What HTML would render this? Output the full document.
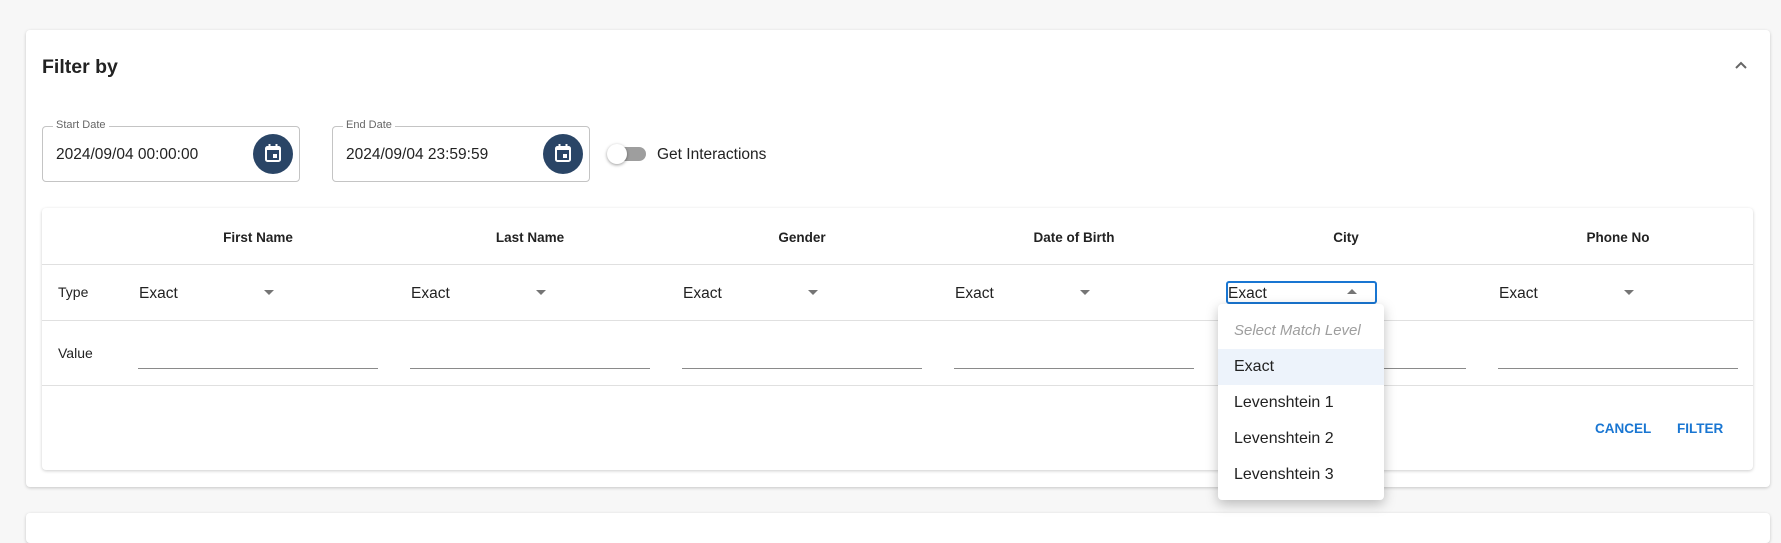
<!DOCTYPE html>
<html><head><meta charset="utf-8"><style>
*{box-sizing:border-box;margin:0;padding:0}
body{width:1781px;height:525px;background:#f7f7f7;font-family:"Liberation Sans",Roboto,sans-serif;color:#222;position:relative;overflow:hidden}
.abs{position:absolute}
.card{background:#fff;border-radius:4px;box-shadow:0 1px 3px rgba(0,0,0,.2)}
.field{border:1px solid #c4c4c4;border-radius:4px;height:56px;width:258px}
.flabel{position:absolute;top:-8px;left:10px;background:#fff;padding:0 3px;font-size:11px;color:#666}
.fval{position:absolute;left:13px;top:19px;font-size:15.5px;color:#222}
.cal{position:absolute;width:40px;height:40px;border-radius:50%;background:#2a4566;top:7px;right:6px}
.hd{font-size:13.5px;font-weight:bold;top:230px;width:272px;text-align:center}
.line{height:1px;background:#e0e0e0;left:42px;width:1711px}
.sel{font-size:15.5px;top:285px}
.arr{width:0;height:0;border-left:5px solid transparent;border-right:5px solid transparent;border-top:5px solid #757575}
.ul{height:1px;background:#8a8a8a;top:368px;width:240px}
.item{position:absolute;left:0;width:166px;height:36px;line-height:36px;padding-left:16px;font-size:16px;color:#222}
.btn{font-size:13.5px;font-weight:bold;color:#1976d2;top:421px}
</style></head><body>
<div class="abs card" style="left:26px;top:30px;width:1744px;height:457px"></div>
<div class="abs card" style="left:26px;top:513px;width:1744px;height:30px"></div>
<div class="abs" style="left:42px;top:56px;font-size:19.5px;font-weight:bold;color:#222">Filter by</div>
<svg class="abs" style="left:1734px;top:60px" width="14" height="10" viewBox="0 0 14 10"><path d="M2 8L7 3L12 8" stroke="#666" stroke-width="2" fill="none"/></svg>

<div class="abs field" style="left:42px;top:126px"><span class="flabel">Start Date</span><span class="fval">2024/09/04 00:00:00</span><div class="cal"><svg width="40" height="40" viewBox="0 0 40 40"><rect x="13" y="13" width="14" height="14" rx="1.5" fill="none" stroke="#fff" stroke-width="2"/><rect x="13" y="13" width="14" height="3" fill="#fff"/><rect x="15.5" y="10" width="2" height="4" fill="#fff"/><rect x="22.5" y="10" width="2" height="4" fill="#fff"/><rect x="20" y="20" width="4" height="4" fill="#fff"/></svg></div></div>
<div class="abs field" style="left:332px;top:126px"><span class="flabel">End Date</span><span class="fval">2024/09/04 23:59:59</span><div class="cal"><svg width="40" height="40" viewBox="0 0 40 40"><rect x="13" y="13" width="14" height="14" rx="1.5" fill="none" stroke="#fff" stroke-width="2"/><rect x="13" y="13" width="14" height="3" fill="#fff"/><rect x="15.5" y="10" width="2" height="4" fill="#fff"/><rect x="22.5" y="10" width="2" height="4" fill="#fff"/><rect x="20" y="20" width="4" height="4" fill="#fff"/></svg></div></div>
<div class="abs" style="left:612px;top:147px;width:34px;height:14px;border-radius:7px;background:#9e9e9e"></div>
<div class="abs" style="left:607px;top:144px;width:20px;height:20px;border-radius:50%;background:#fff;box-shadow:0 1px 3px rgba(0,0,0,.4)"></div>
<div class="abs" style="left:657px;top:146px;font-size:15.5px">Get Interactions</div>

<div class="abs card" style="left:42px;top:208px;width:1711px;height:262px"></div>
<div class="abs hd" style="left:122px">First Name</div>
<div class="abs hd" style="left:394px">Last Name</div>
<div class="abs hd" style="left:666px">Gender</div>
<div class="abs hd" style="left:938px">Date of Birth</div>
<div class="abs hd" style="left:1210px">City</div>
<div class="abs hd" style="left:1482px">Phone No</div>
<div class="abs line" style="top:264px"></div>
<div class="abs line" style="top:320px"></div>
<div class="abs line" style="top:385px"></div>
<div class="abs" style="left:58px;top:284px;font-size:14px">Type</div>
<div class="abs" style="left:58px;top:345px;font-size:14px">Value</div>

<div class="abs sel" style="left:139px">Exact</div><div class="abs arr" style="left:264px;top:290px"></div>
<div class="abs sel" style="left:411px">Exact</div><div class="abs arr" style="left:536px;top:290px"></div>
<div class="abs sel" style="left:683px">Exact</div><div class="abs arr" style="left:808px;top:290px"></div>
<div class="abs sel" style="left:955px">Exact</div><div class="abs arr" style="left:1080px;top:290px"></div>
<div class="abs" style="left:1226px;top:281px;width:151px;height:23px;border:2px solid #1976d2;border-radius:3px"></div>
<div class="abs sel" style="left:1228px">Exact</div>
<div class="abs" style="left:1347px;top:289px;width:0;height:0;border-left:5px solid transparent;border-right:5px solid transparent;border-bottom:5px solid #757575"></div>
<div class="abs sel" style="left:1499px">Exact</div><div class="abs arr" style="left:1624px;top:290px"></div>

<div class="abs ul" style="left:138px"></div>
<div class="abs ul" style="left:410px"></div>
<div class="abs ul" style="left:682px"></div>
<div class="abs ul" style="left:954px"></div>
<div class="abs ul" style="left:1226px"></div>
<div class="abs ul" style="left:1498px"></div>

<div class="abs btn" style="left:1595px">CANCEL</div>
<div class="abs btn" style="left:1677px">FILTER</div>

<div class="abs" style="left:1218px;top:304px;width:166px;height:196px;background:#fff;border-radius:4px;box-shadow:0 4px 12px rgba(0,0,0,.25)">
<div class="item" style="top:9px;color:#9e9e9e;font-style:italic;font-size:15px">Select Match Level</div>
<div class="item" style="top:45px;background:#edf3fb">Exact</div>
<div class="item" style="top:81px">Levenshtein 1</div>
<div class="item" style="top:117px">Levenshtein 2</div>
<div class="item" style="top:153px">Levenshtein 3</div>
</div>
</body></html>
